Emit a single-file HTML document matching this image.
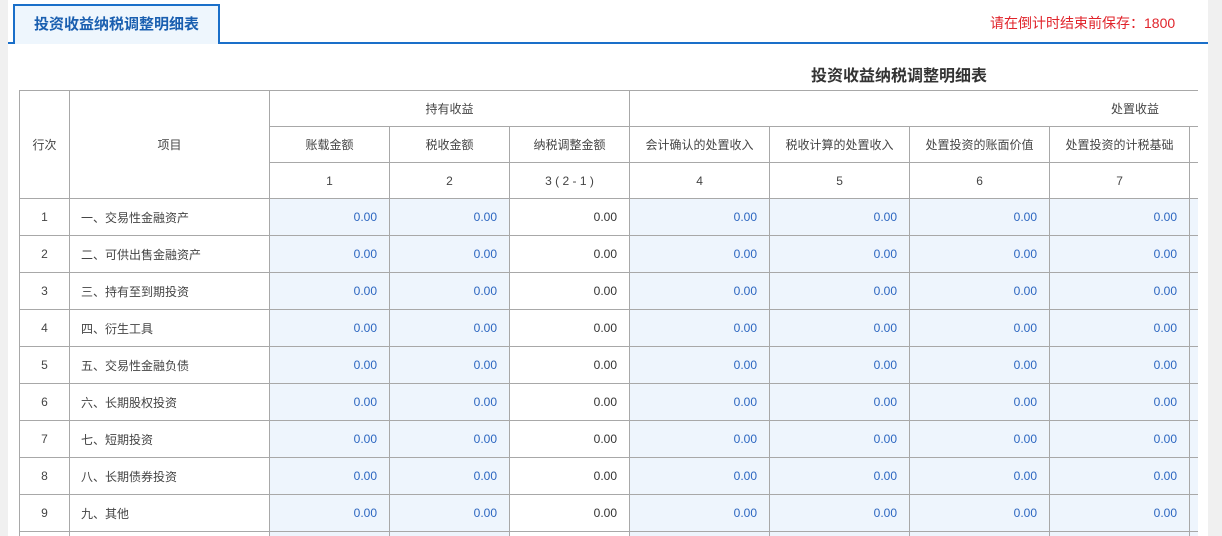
<!DOCTYPE html>
<html><head><meta charset="utf-8"><style>
*{margin:0;padding:0;box-sizing:border-box}
html,body{width:1222px;height:536px;overflow:hidden}
body{background:#f0f0f0;font-family:"Liberation Sans","Noto Sans CJK SC",sans-serif;position:relative}
#main{position:absolute;left:8px;top:0;width:1200px;height:536px;background:#fff}
#tab{position:absolute;left:13px;top:4px;width:207px;height:40px;border:2px solid #1a6fc9;border-bottom:none;background:#eef6fd;color:#1a5fb0;font-size:15px;font-weight:bold;text-align:center;line-height:38px;z-index:2}
#line{position:absolute;left:8px;top:42px;width:1200px;height:2px;background:#1a6fc9}
#cd{position:absolute;left:990px;top:13px;color:#e0242b;font-size:14px}
#title{position:absolute;left:811px;top:62px;font-size:16px;font-weight:bold;color:#333}
#wrap{position:absolute;left:19px;top:90px;width:1179px;height:446px;overflow:hidden}
table{border-collapse:collapse;table-layout:fixed;width:1620px;font-size:12px;color:#444}
td{border:1px solid #a8a8a8;text-align:center;overflow:hidden;white-space:nowrap}
tr.h td{height:36px}
tr.d td{height:37px}
td.l{text-align:left;padding-left:11px}
td.v{background:#eef5fd;color:#2c66c0;text-align:right;padding-right:12px}
td.w{text-align:right;padding-right:12px;color:#333}
</style></head><body>
<div id="main"></div>
<div id="tab">投资收益纳税调整明细表</div>
<div id="line"></div>
<div id="cd">请在倒计时结束前保存：1800</div>
<div id="title">投资收益纳税调整明细表</div>
<div id="wrap"><table>
<colgroup><col style="width:50px"><col style="width:200px"><col style="width:120px"><col style="width:120px"><col style="width:120px"><col style="width:140px"><col style="width:140px"><col style="width:140px"><col style="width:140px"><col style="width:450px"></colgroup>
<tr class="h"><td rowspan="3">行次</td><td rowspan="3">项目</td><td colspan="3">持有收益</td><td colspan="5" style="text-align:left"><span style="position:relative;left:481px">处置收益</span></td></tr>
<tr class="h"><td>账载金额</td><td>税收金额</td><td>纳税调整金额</td><td>会计确认的处置收入</td><td>税收计算的处置收入</td><td>处置投资的账面价值</td><td>处置投资的计税基础</td><td></td></tr>
<tr class="h"><td>1</td><td>2</td><td>3 ( 2 - 1 )</td><td>4</td><td>5</td><td>6</td><td>7</td><td></td></tr>
<tr class="d"><td>1</td><td class="l">一、交易性金融资产</td><td class="v">0.00</td><td class="v">0.00</td><td class="w">0.00</td><td class="v">0.00</td><td class="v">0.00</td><td class="v">0.00</td><td class="v">0.00</td><td class="v"></td></tr>
<tr class="d"><td>2</td><td class="l">二、可供出售金融资产</td><td class="v">0.00</td><td class="v">0.00</td><td class="w">0.00</td><td class="v">0.00</td><td class="v">0.00</td><td class="v">0.00</td><td class="v">0.00</td><td class="v"></td></tr>
<tr class="d"><td>3</td><td class="l">三、持有至到期投资</td><td class="v">0.00</td><td class="v">0.00</td><td class="w">0.00</td><td class="v">0.00</td><td class="v">0.00</td><td class="v">0.00</td><td class="v">0.00</td><td class="v"></td></tr>
<tr class="d"><td>4</td><td class="l">四、衍生工具</td><td class="v">0.00</td><td class="v">0.00</td><td class="w">0.00</td><td class="v">0.00</td><td class="v">0.00</td><td class="v">0.00</td><td class="v">0.00</td><td class="v"></td></tr>
<tr class="d"><td>5</td><td class="l">五、交易性金融负债</td><td class="v">0.00</td><td class="v">0.00</td><td class="w">0.00</td><td class="v">0.00</td><td class="v">0.00</td><td class="v">0.00</td><td class="v">0.00</td><td class="v"></td></tr>
<tr class="d"><td>6</td><td class="l">六、长期股权投资</td><td class="v">0.00</td><td class="v">0.00</td><td class="w">0.00</td><td class="v">0.00</td><td class="v">0.00</td><td class="v">0.00</td><td class="v">0.00</td><td class="v"></td></tr>
<tr class="d"><td>7</td><td class="l">七、短期投资</td><td class="v">0.00</td><td class="v">0.00</td><td class="w">0.00</td><td class="v">0.00</td><td class="v">0.00</td><td class="v">0.00</td><td class="v">0.00</td><td class="v"></td></tr>
<tr class="d"><td>8</td><td class="l">八、长期债券投资</td><td class="v">0.00</td><td class="v">0.00</td><td class="w">0.00</td><td class="v">0.00</td><td class="v">0.00</td><td class="v">0.00</td><td class="v">0.00</td><td class="v"></td></tr>
<tr class="d"><td>9</td><td class="l">九、其他</td><td class="v">0.00</td><td class="v">0.00</td><td class="w">0.00</td><td class="v">0.00</td><td class="v">0.00</td><td class="v">0.00</td><td class="v">0.00</td><td class="v"></td></tr>
<tr class="d"><td></td><td></td><td class="v"></td><td class="v"></td><td class="w"></td><td class="v"></td><td class="v"></td><td class="v"></td><td class="v"></td><td class="v"></td></tr>
</table></div>
</body></html>
